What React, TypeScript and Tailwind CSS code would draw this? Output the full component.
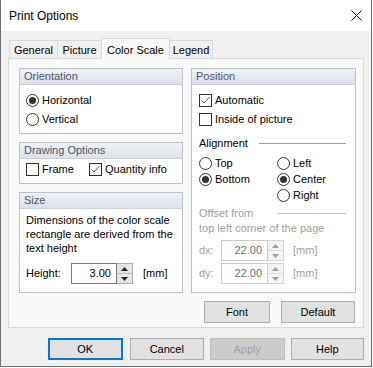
import type { ReactNode } from "react";

/* small win10-ish controls */
function Radio({ checked, label }: { checked?: boolean; label: string }) {
  return (
    <div className="flex items-center gap-[3px]">
      <span className="flex h-[13px] w-[13px] items-center justify-center rounded-full border border-[#333] bg-white">
        {checked && <span className="h-[7px] w-[7px] rounded-full bg-[#333]" />}
      </span>
      <span>{label}</span>
    </div>
  );
}

function Check({ checked, label }: { checked?: boolean; label: string }) {
  return (
    <div className="flex items-center gap-[3px]">
      <span className="flex h-[13px] w-[13px] items-center justify-center border border-[#333] bg-white">
        {checked && (
          <svg width="11" height="11" viewBox="0 0 11 11">
            <polyline points="1.5,5.5 4,8 9.5,2" fill="none" stroke="#555" strokeWidth="1" />
          </svg>
        )}
      </span>
      <span>{label}</span>
    </div>
  );
}

function Spin({ value, disabled, w }: { value: string; disabled?: boolean; w: string }) {
  return (
    <div className="flex h-[21px]">
      <div
        className={`${w} flex items-center justify-end border pr-[5px] ${
          disabled ? "border-[#cccccc] bg-white text-[#6d6d6d]" : "border-[#7a7a7a] bg-white text-black"
        }`}
      >
        {value}
      </div>
      <div
        className={`flex w-[16px] flex-col border border-l-0 ${
          disabled ? "border-[#d5d5d5] bg-[#f4f4f4]" : "border-[#adadad] bg-[#e5e5e5]"
        }`}
      >
        <div className="flex flex-1 items-center justify-center">
          <svg width="7" height="4" viewBox="0 0 7 4">
            <polygon points="0,4 3.5,0 7,4" fill={disabled ? "#a0a0a0" : "#222"} />
          </svg>
        </div>
        <div className={`h-px ${disabled ? "bg-[#dcdcdc]" : "bg-[#bcbcbc]"}`} />
        <div className="flex flex-1 items-center justify-center">
          <svg width="7" height="4" viewBox="0 0 7 4">
            <polygon points="0,0 7,0 3.5,4" fill={disabled ? "#a0a0a0" : "#222"} />
          </svg>
        </div>
      </div>
    </div>
  );
}

function Group({ title, className, children }: { title: string; className: string; children: ReactNode }) {
  return (
    <div className={`flex flex-col border border-[#b9c0cf] bg-white ${className}`}>
      <div className="flex h-[16px] items-center border-b border-[#c9ced8] bg-linear-to-b from-[#eff1f5] to-[#dde1e9] pl-[4px] text-[#4b5872]">
        {title}
      </div>
      <div className="flex flex-1 flex-col">{children}</div>
    </div>
  );
}

function Btn({ children, className }: { children: ReactNode; className: string }) {
  return (
    <div className={`flex h-[22px] items-center justify-center border border-[#adadad] bg-[#e1e1e1] ${className}`}>
      {children}
    </div>
  );
}

export default function App() {
  const tabs = [
    { name: "General", w: "w-[48px] border-l" },
    { name: "Picture", w: "w-[44px] border-l" },
  ];

  return (
    <div className="h-[368px] w-[373px] bg-white font-['Liberation_Sans',Arial,sans-serif] text-[11px] text-black">
      <div className="flex h-[367px] w-[372px] flex-col border-x border-b border-[#707070]">
        {/* title bar */}
        <div className="flex h-[31px] items-center justify-between bg-white pl-[8px] pr-[9px]">
          <span className="text-[12px]">Print Options</span>
          <svg width="11" height="11" viewBox="0 0 11 11">
            <line x1="0.5" y1="0.5" x2="10.5" y2="10.5" stroke="#111" strokeWidth="1" />
            <line x1="10.5" y1="0.5" x2="0.5" y2="10.5" stroke="#111" strokeWidth="1" />
          </svg>
        </div>

        <div className="flex flex-1 flex-col bg-[#f0f0f0] px-[7px]">
          {/* tabs */}
          <div className="flex h-[27px] items-end pl-[1px]">
            {tabs.map((t) => (
              <div
                key={t.name}
                className={`${t.w} flex h-[18px] items-center justify-center border-t border-[#d9d9d9] bg-[#f0f0f0] pt-[1px]`}
              >
                {t.name}
              </div>
            ))}
            <div className="relative z-10 -mb-px flex h-[21px] w-[69px] items-start justify-center border border-b-0 border-[#d9d9d9] bg-[#f9f9f9] pt-[3px]">
              Color Scale
            </div>
            <div className="flex h-[18px] w-[43px] items-center justify-center border-r border-t border-[#d9d9d9] bg-[#f0f0f0] pt-[1px]">
              Legend
            </div>
          </div>

          {/* tab panel */}
          <div className="flex h-[270px] gap-[8px] border border-[#d9d9d9] bg-[#f9f9f9] pl-[10px] pt-[9px]">
            {/* left column */}
            <div className="flex w-[164px] flex-col gap-[8px]">
              <Group title="Orientation" className="h-[66px]">
                <div className="flex flex-col pl-[6px] pt-[6px]">
                  <div className="flex h-[19px] items-center">
                    <Radio checked label="Horizontal" />
                  </div>
                  <div className="flex h-[19px] items-center">
                    <Radio label="Vertical" />
                  </div>
                </div>
              </Group>

              <Group title="Drawing Options" className="h-[42px]">
                <div className="flex h-[19px] items-center pl-[6px] pt-[2px]">
                  <div className="w-[63px]">
                    <Check label="Frame" />
                  </div>
                  <Check checked label="Quantity info" />
                </div>
              </Group>

              <Group title="Size" className="h-[101px]">
                <div className="pl-[6px] pt-[4px] leading-[14px] whitespace-nowrap">
                  Dimensions of the color scale
                  <br />
                  rectangle are derived from the
                  <br />
                  text height
                </div>
                <div className="mt-[8px] flex items-center pl-[6px]">
                  <span className="w-[45px]">Height:</span>
                  <Spin value="3.00" w="w-[46px]" />
                  <span className="ml-[10px]">[mm]</span>
                </div>
              </Group>
            </div>

            {/* right column */}
            <div className="flex w-[165px] flex-col">
              <Group title="Position" className="h-[225px]">
                <div className="flex flex-col pl-[7px] pr-[9px] pt-[6px]">
                  <div className="flex h-[19px] items-center">
                    <Check checked label="Automatic" />
                  </div>
                  <div className="flex h-[19px] items-center">
                    <Check label="Inside of picture" />
                  </div>

                  <div className="mt-[5px] flex h-[18px] items-center">
                    <span>Alignment</span>
                    <span className="ml-auto h-px w-[87px] bg-[#a0a0a0]" />
                  </div>

                  <div className="mt-[3px] flex">
                    <div className="flex w-[78px] flex-col">
                      <div className="flex h-[16px] items-center">
                        <Radio label="Top" />
                      </div>
                      <div className="flex h-[16px] items-center">
                        <Radio checked label="Bottom" />
                      </div>
                    </div>
                    <div className="flex flex-col">
                      <div className="flex h-[16px] items-center">
                        <Radio label="Left" />
                      </div>
                      <div className="flex h-[16px] items-center">
                        <Radio checked label="Center" />
                      </div>
                      <div className="flex h-[16px] items-center">
                        <Radio label="Right" />
                      </div>
                    </div>
                  </div>

                  <div className="mt-[2px] flex h-[16px] items-center text-[#a0a0a0]">
                    <span>Offset from</span>
                    <span className="ml-auto h-px w-[69px] bg-[#c8c8c8]" />
                  </div>
                  <div className="flex h-[15px] items-center text-[#a0a0a0]">top left corner of the page</div>

                  <div className="mt-[4px] flex items-center">
                    <span className="w-[22px] text-[#a0a0a0]">dx:</span>
                    <Spin value="22.00" disabled w="w-[47px]" />
                    <span className="ml-[9px] text-[#a0a0a0]">[mm]</span>
                  </div>
                  <div className="mt-[2px] flex items-center">
                    <span className="w-[22px] text-[#a0a0a0]">dy:</span>
                    <Spin value="22.00" disabled w="w-[47px]" />
                    <span className="ml-[9px] text-[#a0a0a0]">[mm]</span>
                  </div>
                </div>
              </Group>

              <div className="mt-[8px] flex">
                <Btn className="ml-[13px] w-[66px]">Font</Btn>
                <Btn className="ml-[11px] w-[74px]">Default</Btn>
              </div>
            </div>
          </div>

          {/* dialog buttons */}
          <div className="mt-[10px] flex">
            <div className="ml-[40px] flex h-[22px] w-[75px] items-center justify-center border-2 border-[#0078d7] bg-[#e1e1e1]">
              OK
            </div>
            <Btn className="ml-[7px] w-[75px]">Cancel</Btn>
            <div className="ml-[6px] flex h-[22px] w-[75px] items-center justify-center border border-[#bfbfbf] bg-[#cccccc] text-[#a0a0a0]">
              Apply
            </div>
            <Btn className="ml-[6px] w-[74px]">Help</Btn>
          </div>
        </div>
      </div>
    </div>
  );
}
